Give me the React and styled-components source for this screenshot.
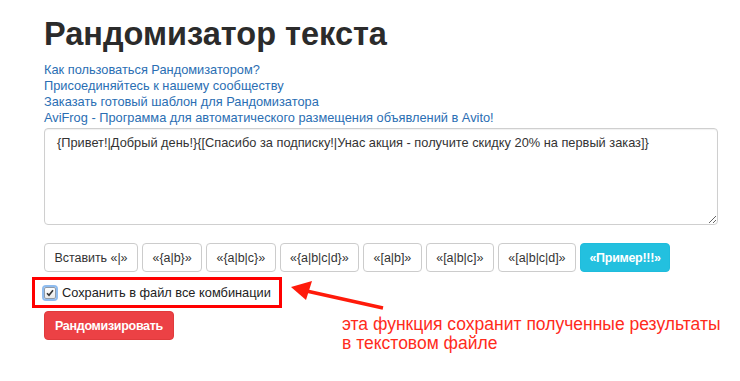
import React from "react";
import styled, { createGlobalStyle } from "styled-components";

const GlobalStyle = createGlobalStyle`
  body {
    margin: 0;
    background: #fff;
    font-family: "Liberation Sans", Arial, sans-serif;
    color: #333;
  }
`;

const Page = styled.div`
  padding: 16px 22px 0 44px;
`;

const Title = styled.h1`
  margin: 0 0 9px;
  font-size: 32.5px;
  line-height: 37px;
  font-weight: bold;
  color: #2b2b2b;
`;

const Links = styled.div`
  display: flex;
  flex-direction: column;
  align-items: flex-start;
  margin-bottom: 2px;
`;

const StyledLink = styled.a`
  font-size: 12.8px;
  line-height: 16px;
  color: #2a6eb3;
  text-decoration: none;
`;

const TextArea = styled.textarea`
  display: block;
  box-sizing: border-box;
  width: 674px;
  height: 97px;
  margin: 0;
  padding: 6px 12px;
  border: 1px solid #cfcfcf;
  border-radius: 4px;
  box-shadow: inset 0 1px 1px rgba(0, 0, 0, 0.06);
  font-family: "Liberation Sans", Arial, sans-serif;
  font-size: 12.8px;
  line-height: 16px;
  color: #333;
  resize: vertical;
  outline: none;
`;

const Toolbar = styled.div`
  display: flex;
  gap: 4px;
  margin-top: 18px;
`;

const Button = styled.button`
  flex-shrink: 0;
  box-sizing: border-box;
  height: 29px;
  padding: 0 ${(p) => (p.$variant === "info" ? "8.5px" : p.$variant ? "10px" : "9.5px")};
  border-radius: 4px;
  font-family: "Liberation Sans", Arial, sans-serif;
  font-size: 12.5px;
  line-height: 16px;
  white-space: nowrap;
  cursor: pointer;
  border: 1px solid ${(p) => (p.$variant === "info" ? "#1fbcdc" : p.$variant === "danger" ? "#e03a3c" : "#cccccc")};
  background: ${(p) => (p.$variant === "info" ? "#23c0df" : p.$variant === "danger" ? "#ec4145" : "#fff")};
  color: ${(p) => (p.$variant ? "#fff" : "#333")};
  font-weight: ${(p) => (p.$variant ? "bold" : "normal")};
  letter-spacing: ${(p) => (p.$variant ? "-0.3px" : "-0.05px")};
`;

const Bottom = styled.div`
  display: flex;
  align-items: flex-start;
  margin-top: 5px;
`;

const LeftCol = styled.div`
  display: flex;
  flex-direction: column;
  align-items: flex-start;
  gap: 3px;
`;

const Highlight = styled.label`
  box-sizing: border-box;
  display: flex;
  align-items: center;
  gap: 6px;
  width: 250px;
  margin-left: -12px;
  padding: 5px 0 4px 9px;
  border: 3px solid #ff0000;
  font-size: 12.8px;
  line-height: 16px;
  color: #222;
  white-space: nowrap;
`;

const CheckBox = styled.span`
  display: inline-flex;
  align-items: center;
  justify-content: center;
  box-sizing: border-box;
  width: 12px;
  height: 12px;
  border: 1px solid #8e9aa8;
  border-radius: 2px;
  background: linear-gradient(#ffffff, #e8e8e8);
  box-shadow: 0 0 0 2px #8fbcef;
`;

const Annotation = styled.div`
  display: flex;
  flex-direction: column;
  margin-left: 6px;
`;

const Note = styled.p`
  margin: 4px 0 0 54px;
  font-size: 17.5px;
  line-height: 19px;
  color: #ff2b1c;
  white-space: nowrap;
`;

const buttons = [
  "Вставить «|»",
  "«{a|b}»",
  "«{a|b|c}»",
  "«{a|b|c|d}»",
  "«[a|b]»",
  "«[a|b|c]»",
  "«[a|b|c|d]»",
];

const App = () => {
  return (
    <Page>
      <GlobalStyle />
      <Title>Рандомизатор текста</Title>
      <Links>
        <StyledLink href="#">Как пользоваться Рандомизатором?</StyledLink>
        <StyledLink href="#">Присоединяйтесь к нашему сообществу</StyledLink>
        <StyledLink href="#">Заказать готовый шаблон для Рандомизатора</StyledLink>
        <StyledLink href="#">
          AviFrog - Программа для автоматического размещения объявлений в Avito!
        </StyledLink>
      </Links>
      <TextArea
        spellCheck={false}
        defaultValue="{Привет!|Добрый день!}{[Спасибо за подписку!|Унас акция - получите скидку 20% на первый заказ]}"
      />
      <Toolbar>
        {buttons.map((b) => (
          <Button key={b}>{b}</Button>
        ))}
        <Button $variant="info">«Пример!!!»</Button>
      </Toolbar>
      <Bottom>
        <LeftCol>
          <Highlight>
            <CheckBox>
              <svg width="8" height="8" viewBox="0 0 8 8">
                <path d="M1 4.2 L3 6.3 L7 1.2" fill="none" stroke="#333" strokeWidth="1.6" />
              </svg>
            </CheckBox>
            Сохранить в файл все комбинации
          </Highlight>
          <Button $variant="danger">Рандомизировать</Button>
        </LeftCol>
        <Annotation>
          <svg width="100" height="34" viewBox="0 0 100 34">
            <line x1="95" y1="31" x2="14" y2="13" stroke="#ff1a0a" strokeWidth="3.5" />
            <polygon points="3,10 24,4 18,23" fill="#ff1a0a" />
          </svg>
          <Note>
            эта функция сохранит полученные результаты
            <br />в текстовом файле
          </Note>
        </Annotation>
      </Bottom>
    </Page>
  );
};

export default App;
